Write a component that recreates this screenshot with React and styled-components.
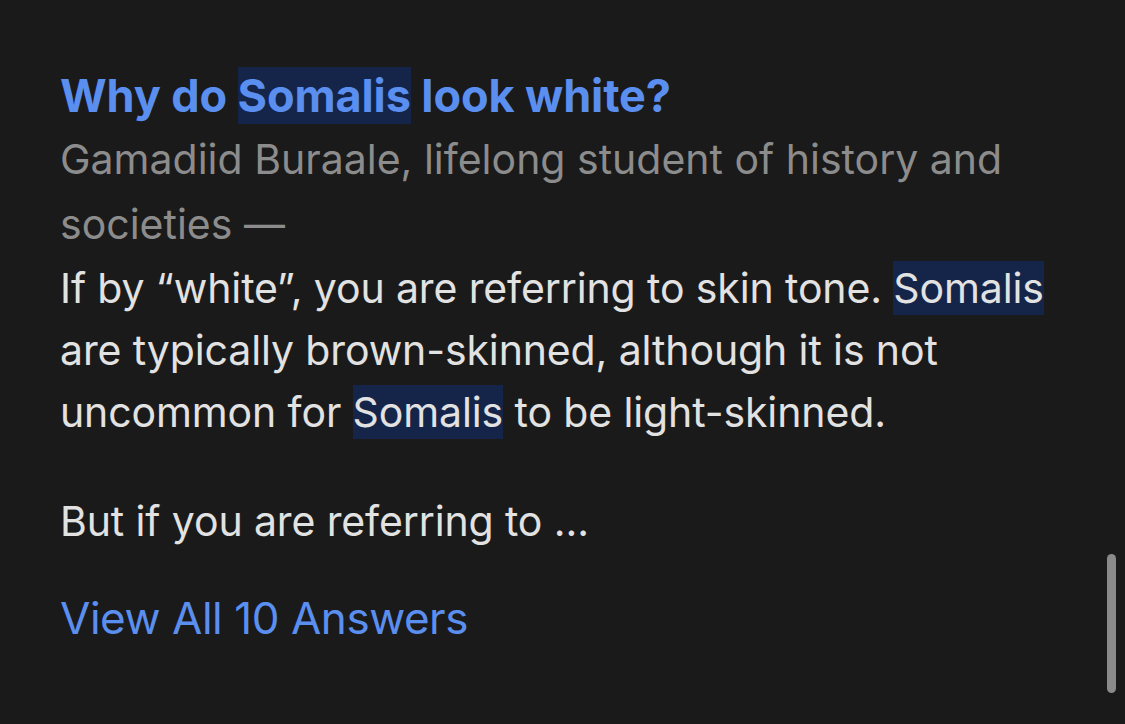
import React from 'react';
import styled, { createGlobalStyle } from 'styled-components';

const GlobalStyle = createGlobalStyle`
html, body {
	margin: 0;
	padding: 0;
	background: #1a1a1a;
}
body {
	font-family: Inter, "Noto Sans", sans-serif;
	-webkit-font-smoothing: antialiased;
}
`;

const Screen = styled.main`
position: relative;
width: 1125px;
height: 724px;
overflow: hidden;
background: #1a1a1a;
box-sizing: border-box;
padding: 64px 60px 0 60px;
`;

const Card = styled.article`
display: flex;
flex-direction: column;
align-items: flex-start;
`;

const Title = styled.h2`
margin: 0;
font-size: 45px;
font-weight: 700;
line-height: 63px;
color: #5a8ff0;
letter-spacing: -0.1px;
`;

const Meta = styled.div`
font-size: 41px;
line-height: 65px;
color: #8c8c8c;
`;

const Body = styled.div`
display: flex;
flex-direction: column;
gap: 47px;
`;

const Paragraph = styled.p`
margin: 0;
font-size: 41px;
line-height: 62px;
color: #e2e2e2;
letter-spacing: -0.12px;
`;

const Mark = styled.span`
background: #15254a;
padding: ${({$big}) => $big ? '1px 0' : '2px 0'};
`;

const ViewAll = styled.a`
margin-top: 35px;
font-size: 44px;
line-height: 62px;
color: #5a8ff0;
letter-spacing: -0.45px;
text-decoration: none;
`;

const Scrollbar = styled.div`
position: absolute;
right: 9px;
top: 554px;
width: 9px;
height: 139px;
border-radius: 5px;
background: #8a8a8a;
`;

export default function App() {
	return <>
		<GlobalStyle />
		<Screen>
			<Card>
				<Title>Why do <Mark $big>Somalis</Mark> look white?</Title>
				<Meta>Gamadiid Buraale, lifelong student of history and societies —</Meta>
				<Body>
					<Paragraph>
						If by “white”, you are referring to skin tone. <Mark>Somalis</Mark> are typically brown-skinned, although it is not uncommon for <Mark>Somalis</Mark> to be light-skinned.
					</Paragraph>
					<Paragraph>But if you are referring to ...</Paragraph>
				</Body>
				<ViewAll href="#">View All 10 Answers</ViewAll>
			</Card>
			<Scrollbar />
		</Screen>
	</>;
}
